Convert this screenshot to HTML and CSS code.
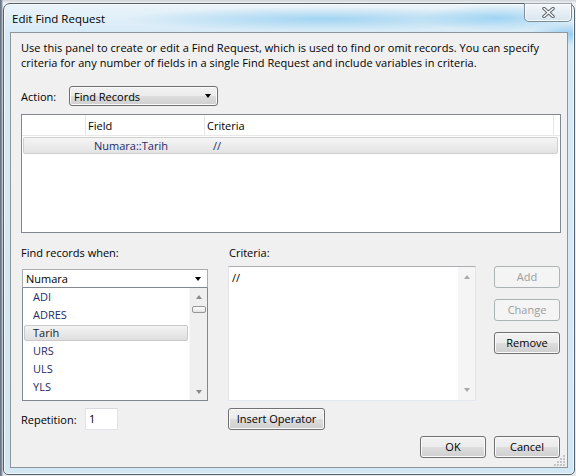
FILE: index.html
```html
<!DOCTYPE html>
<html>
<head>
<meta charset="utf-8">
<title>Edit Find Request</title>
<link rel="stylesheet" href="styles.css">
</head>
<body>
<div class="desktop">
  <div class="window">
    <div class="titlebar">
      <span class="title">Edit Find Request</span>
      <div class="close">
        <svg width="13" height="11" viewBox="0 0 13 11">
          <path d="M2 1.5 L11 9.5 M11 1.5 L2 9.5" stroke="#5b646d" stroke-width="3.4" stroke-linecap="round" fill="none"/>
          <path d="M2 1.5 L11 9.5 M11 1.5 L2 9.5" stroke="#ffffff" stroke-width="1.4" stroke-linecap="round" fill="none"/>
        </svg>
      </div>
    </div>
    <div class="client">
      <p class="desc">Use this panel to create or edit a Find Request, which is used to find or omit records. You can specify<br>criteria for any number of fields in a single Find Request and include variables in criteria.</p>

      <div class="action-row">
        <span class="action-label">Action:</span>
        <div class="combo-btn"><span>Find Records</span><span class="arrow"></span></div>
      </div>

      <div class="table">
        <div class="thead">
          <div class="th c0"></div>
          <div class="th c1">Field</div>
          <div class="th c2">Criteria</div>
          <div class="th c3"></div>
        </div>
        <div class="trow">
          <div class="td c0"></div>
          <div class="td c1">Numara::Tarih</div>
          <div class="td c2">//</div>
        </div>
      </div>

      <div class="lower">
        <div class="col-left">
          <div class="label-top">Find records when:</div>
          <div class="combo-edit"><span>Numara</span><span class="arrow"></span></div>
          <div class="listbox">
            <ul class="items">
              <li>ADI</li>
              <li>ADRES</li>
              <li class="sel">Tarih</li>
              <li>URS</li>
              <li>ULS</li>
              <li>YLS</li>
            </ul>
            <div class="vscroll">
              <div class="sb-btn"><span class="up"></span></div>
              <div class="thumb"></div>
              <div class="sb-fill"></div>
              <div class="sb-btn"><span class="down"></span></div>
            </div>
          </div>
          <div class="rep-row">
            <span class="rep-label">Repetition:</span>
            <div class="textbox">1</div>
          </div>
        </div>

        <div class="col-mid">
          <div class="label-top crit-label">Criteria:</div>
          <div class="textarea">
            <div class="ta-text">//</div>
            <div class="vscroll light">
              <div class="sb-btn tall"><span class="up"></span></div>
              <div class="sb-fill"></div>
              <div class="sb-btn tall"><span class="down"></span></div>
            </div>
          </div>
          <button class="btn insert">Insert Operator</button>
        </div>

        <div class="col-right">
          <button class="btn side" disabled>Add</button>
          <button class="btn side" disabled>Change</button>
          <button class="btn side">Remove</button>
        </div>
      </div>

      <div class="footer">
        <button class="btn side">OK</button>
        <button class="btn side">Cancel</button>
      </div>

      <svg class="grip" width="12" height="12" viewBox="0 0 12 12">
        <g fill="#c2c6ca">
          <rect x="9" y="1" width="2" height="2"/>
          <rect x="6" y="4" width="2" height="2"/>
          <rect x="9" y="4" width="2" height="2"/>
          <rect x="3" y="7" width="2" height="2"/>
          <rect x="6" y="7" width="2" height="2"/>
          <rect x="9" y="7" width="2" height="2"/>
          <rect x="0" y="10" width="2" height="2"/>
          <rect x="3" y="10" width="2" height="2"/>
          <rect x="6" y="10" width="2" height="2"/>
          <rect x="9" y="10" width="2" height="2"/>
        </g>
      </svg>
    </div>
  </div>
</div>
</body>
</html>
```

FILE: styles.css
```css
* { box-sizing: border-box; }
html, body { margin: 0; padding: 0; }
body {
  width: 576px;
  height: 476px;
  overflow: hidden;
  font-family: "Open Sans", "Noto Sans", sans-serif;
  font-size: 11px;
  color: #000;
  background: #e6e8ea;
}
.desktop {
  width: 576px;
  height: 476px;
  padding: 3px 2px 2px 3px;
  background:
    linear-gradient(90deg, #5f6b78 0, #8d9aa8 2px, rgba(230,232,234,0) 3px),
    linear-gradient(180deg, #cfd3d6 0, #eef0f1 3px, #e6e8ea 100%);
}
.window {
  width: 572px;
  height: 472px;
  border: 1px solid #56626d;
  border-radius: 7px 7px 5px 5px;
  padding: 0 6px 6px 6px;
  display: flex;
  flex-direction: column;
  background:
    radial-gradient(ellipse 200px 12px at 320px 15px, rgba(120,195,238,0.6), rgba(120,195,238,0)),
    radial-gradient(ellipse 80px 13px at 495px 14px, rgba(130,200,240,0.65), rgba(130,200,240,0)),
    radial-gradient(ellipse 40px 12px at 565px 30px, rgba(110,185,235,0.6), rgba(110,185,235,0)),
    linear-gradient(180deg, #eaf3f9 0, #d7ebf7 28px, #d2e7f4 100%);
  box-shadow: inset 0 0 0 1px rgba(255,255,255,0.65);
}
.titlebar {
  height: 28px;
  margin: 0 -6px;
  padding: 0 2px 0 8px;
  display: flex;
  justify-content: space-between;
  align-items: flex-start;
}
.title {
  margin-top: 7px;
  line-height: 15px;
  font-size: 11.5px;
}
.close {
  width: 48px;
  height: 19px;
  margin-top: -1px;
  border: 1px solid #7e8c98;
  border-top-color: #9aa6b0;
  border-radius: 0 0 5px 5px;
  background: linear-gradient(180deg, #f3f7fa 0, #e6eef4 50%, #d9e5ee 100%);
  box-shadow: inset 0 0 0 1px rgba(255,255,255,0.75);
  display: flex;
  align-items: center;
  justify-content: center;
}
.client {
  position: relative;
  height: 436px;
  border: 1px solid #8e959b;
  background: #f0f0f0;
  padding: 7px 6px 0 10px;
  display: flex;
  flex-direction: column;
}
.desc {
  margin: 0;
  line-height: 15px;
  white-space: nowrap;
  letter-spacing: 0.05px;
}
.action-row {
  margin-top: 16px;
  height: 20px;
  display: flex;
  align-items: center;
}
.action-label { width: 48px; }
.combo-btn {
  width: 149px;
  height: 20px;
  border: 1px solid #707070;
  border-radius: 3px;
  background: linear-gradient(180deg, #f2f2f2 0%, #ebebeb 50%, #dddddd 51%, #cfcfcf 100%);
  box-shadow: inset 0 0 0 1px #fbfbfb;
  padding: 0 6px 0 4px;
  display: flex;
  align-items: center;
  justify-content: space-between;
}
.arrow {
  width: 0;
  height: 0;
  border-left: 3.5px solid transparent;
  border-right: 3.5px solid transparent;
  border-top: 4px solid #000;
}
.table {
  margin-top: 8px;
  width: 540px;
  height: 119px;
  border: 1px solid #828790;
  background: #fff;
}
.thead {
  height: 21px;
  display: flex;
  border-bottom: 1px solid #e8e8e8;
}
.th {
  border-right: 1px solid #e5e5e5;
  padding-left: 2px;
  line-height: 21px;
}
.th.c0 { width: 64px; }
.th.c1 { width: 119px; }
.th.c2 { width: 349px; }
.th.c3 { flex: 1; border-right: none; }
.trow {
  margin: 1px 2px 0 1px;
  height: 17px;
  border: 1px solid #cfcfcf;
  border-radius: 2px;
  background: linear-gradient(180deg, #f5f5f5 0, #e3e3e3 100%);
  display: flex;
  color: #1d2a6b;
  line-height: 15px;
}
.td.c0 { width: 62px; }
.td.c1 { width: 119px; padding-left: 8px; }
.td.c2 { padding-left: 8px; }

.lower {
  margin-top: 12px;
  display: flex;
}
.label-top {
  height: 15px;
  line-height: 15px;
}
.col-left {
  width: 187px;
  display: flex;
  flex-direction: column;
}
.combo-edit {
  margin: 9px 0 0 1px;
  height: 19px;
  border: 1px solid #a9adb3;
  border-bottom-color: #828790;
  background: #fff;
  padding: 0 6px 0 3px;
  display: flex;
  align-items: center;
  justify-content: space-between;
}
.listbox {
  margin-left: 1px;
  height: 113px;
  border: 1px solid #828790;
  border-top: none;
  background: #fff;
  display: flex;
}
.items {
  list-style: none;
  margin: 0;
  padding: 0;
  flex: 1;
  color: #1d2a6b;
}
.items li {
  height: 18px;
  line-height: 18px;
  padding-left: 10px;
}
.items li.sel {
  margin: 1px 1px;
  height: 16px;
  line-height: 14px;
  padding-left: 8px;
  border: 1px solid #c9c9c9;
  border-radius: 2px;
  background: linear-gradient(180deg, #f3f3f3 0, #dedede 100%);
  color: #222;
}
.vscroll {
  width: 18px;
  display: flex;
  flex-direction: column;
  align-items: center;
  background: #efefef;
  border-left: 1px solid #f7f7f7;
}
.vscroll.light {
  width: 17px;
  background: #f5f5f5;
  border-left: none;
}
.sb-btn {
  width: 100%;
  height: 17px;
  display: flex;
  align-items: center;
  justify-content: center;
}
.sb-btn.tall { height: 20px; }
.sb-fill { flex: 1; }
.up {
  width: 0;
  height: 0;
  border-left: 3px solid transparent;
  border-right: 3px solid transparent;
  border-bottom: 4px solid #8a8a8a;
}
.down {
  width: 0;
  height: 0;
  border-left: 3px solid transparent;
  border-right: 3px solid transparent;
  border-top: 4px solid #8a8a8a;
}
.vscroll.light .up { border-bottom-color: #a9a9a9; }
.vscroll.light .down { border-top-color: #a9a9a9; }
.thumb {
  width: 14px;
  height: 7px;
  margin-top: 1px;
  border: 1px solid #979797;
  border-radius: 2px;
  background: linear-gradient(180deg, #fdfdfd 0, #e2e2e2 100%);
}
.rep-row {
  margin-top: 7px;
  height: 22px;
  display: flex;
  align-items: center;
}
.rep-label { width: 64px; }
.textbox {
  width: 33px;
  height: 22px;
  border: 1px solid #e2e3ea;
  border-top-color: #d6d8dc;
  background: #fff;
  padding-left: 3px;
  line-height: 20px;
}
.col-mid {
  width: 248px;
  margin-left: 20px;
  display: flex;
  flex-direction: column;
}
.crit-label { padding-left: 1px; }
.textarea {
  margin-top: 6px;
  height: 135px;
  border: 1px solid #abadb3;
  border-left-color: #e2e3ea;
  border-right-color: #e2e3ea;
  border-bottom-color: #e3e9ef;
  background: #fff;
  display: flex;
}
.ta-text {
  flex: 1;
  padding: 3px 0 0 3px;
  line-height: 15px;
}
.btn {
  font-family: "Open Sans", "Noto Sans", sans-serif;
  font-size: 11px;
  color: #000;
  border: 1px solid #707070;
  border-radius: 3px;
  background: linear-gradient(180deg, #f2f2f2 0%, #ebebeb 50%, #dddddd 51%, #cfcfcf 100%);
  box-shadow: inset 0 0 0 1px #fbfbfb;
  padding: 0;
  height: 22px;
  line-height: 18px;
}
.btn:disabled {
  border-color: #adb2b5;
  background: #f4f4f4;
  box-shadow: none;
  color: #9c9c9c;
}
.insert {
  margin-top: 7px;
  width: 97px;
}
.col-right {
  width: 66px;
  margin-left: 18px;
  padding-top: 21px;
  display: flex;
  flex-direction: column;
  gap: 11px;
}
.side { width: 66px; }
.footer {
  margin-top: 6px;
  padding-right: 1px;
  display: flex;
  justify-content: flex-end;
  gap: 8px;
}
.grip {
  position: absolute;
  right: 1px;
  bottom: 1px;
}
```
